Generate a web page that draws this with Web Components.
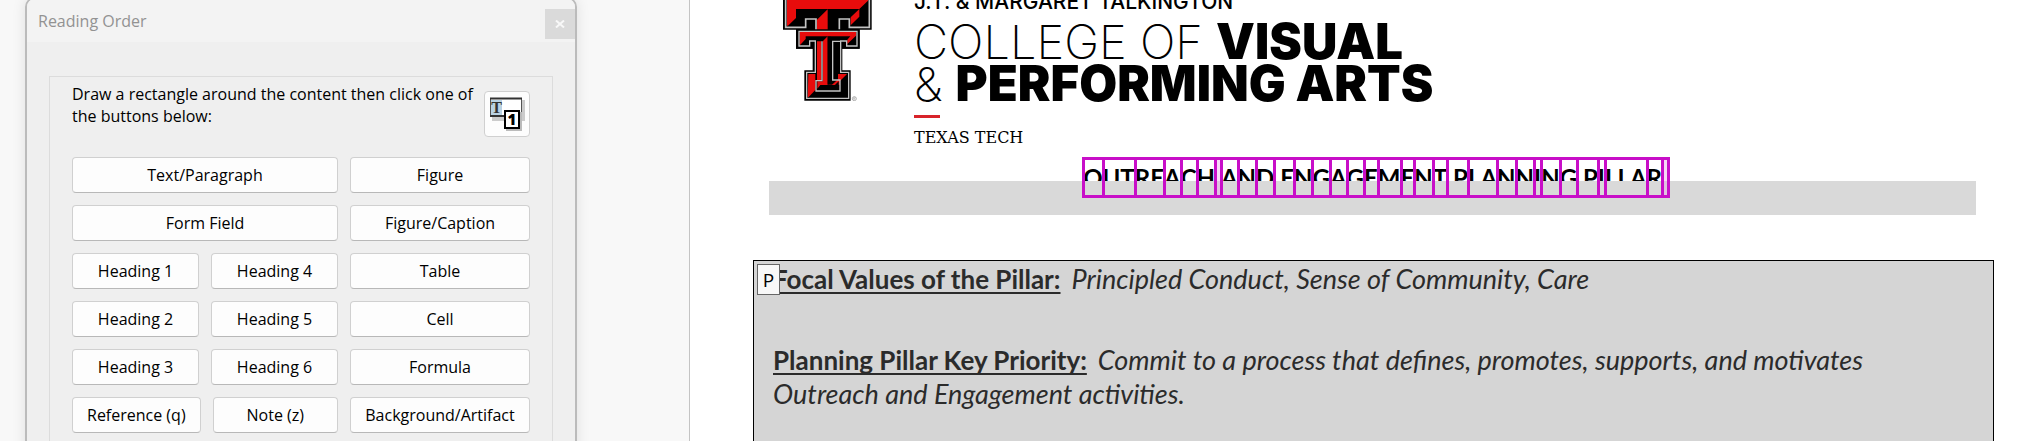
<!DOCTYPE html>
<html lang="en">
<head>
<meta charset="utf-8">
<title>Reading Order</title>
<style>
    body{
        margin:0;
        font-family: "Open Sans", "Noto Sans", sans-serif;
        font-size:16px;
        color:#000;
        background-color:#fff;
        overflow:hidden;
    }
</style>
</head>
<body>

<app-workspace>
    <reading-order-panel slot="panel" heading="Reading Order">
        <span slot="prompt">Draw a rectangle around the content then click one of the buttons below:</span>
        <tag-button slot="wide">Text/Paragraph</tag-button>
        <tag-button slot="side">Figure</tag-button>
        <tag-button slot="form">Form Field</tag-button>
        <tag-button slot="side">Figure/Caption</tag-button>
        <tag-button slot="row1">Heading 1</tag-button>
        <tag-button slot="row1">Heading 4</tag-button>
        <tag-button slot="side">Table</tag-button>
        <tag-button slot="row2">Heading 2</tag-button>
        <tag-button slot="row2">Heading 5</tag-button>
        <tag-button slot="side">Cell</tag-button>
        <tag-button slot="row3">Heading 3</tag-button>
        <tag-button slot="row3">Heading 6</tag-button>
        <tag-button slot="side">Formula</tag-button>
        <tag-button slot="row4">Reference (q)</tag-button>
        <tag-button slot="row4">Note (z)</tag-button>
        <tag-button slot="side">Background/Artifact</tag-button>
    </reading-order-panel>

    <college-header></college-header>
    <tagged-title runs="O|UT|RE|A|C|H| |A|N|D| E|N|G|A|G|E|M|E|N|T| P|LA|N|N|I|N|G| P|I|LLA|R| "></tagged-title>
    <tagged-region tag="P">
        <pillar-entry><span slot="label">Focal Values of the Pillar:</span>Principled Conduct, Sense of Community, Care</pillar-entry>
        <pillar-entry><span slot="label">Planning Pillar Key Priority:</span>Commit to a process that defines, promotes, supports, and motivates<br>Outreach and Engagement activities.</pillar-entry>
    </tagged-region>
</app-workspace>

<script>
class AppWorkspace extends HTMLElement {

    constructor() {
        super();
        this.shadow = this.attachShadow({mode: 'open'});
        this.render();
    }

    render() {
        this.shadow.innerHTML =
        `
        <style>
            :host{
                display:grid;
                grid-template-columns: 690px minmax(0, 1fr);
                height:100vh;
                overflow:hidden;
            }

            aside{
                box-sizing:border-box;
                padding:0 112px 0 25px;
                background-color:#f8f8f8;
                border-right:1px solid #c4c4c4;
            }

            main{
                display:flex;
                flex-direction:column;
                padding:0 34px 0 63px;
            }
        </style>

        <aside><slot name="panel"></slot></aside>
        <main><slot></slot></main>
        `;
    }
}

class ReadingOrderPanel extends HTMLElement {

    constructor() {
        super();
        this.shadow = this.attachShadow({mode: 'open'});
        this.render();
    }

    render() {
        this.shadow.innerHTML =
        `
        <style>
            :host{
                display:block;
                box-sizing:border-box;
                min-height:calc(100vh + 20px);
                margin-top:-3px;
                border:2px solid #bbb;
                border-radius:10px;
                background-color:#efefef;
                box-shadow:0 0 14px rgba(0, 0, 0, 0.1);
                overflow:hidden;
            }

            header{
                display:flex;
                align-items:center;
                justify-content:space-between;
                height:43px;
                padding:0 0 0 11px;
                background-color:#f3f3f3;
                color:#929292;
            }

            h2{
                margin:0;
                font-size:16px;
                font-weight:400;
            }

            .close{
                width:30px;
                height:30px;
                margin-top:7px;
                padding:0;
                border:0;
                background-color:#dadada;
            }

            .close svg{
                display:block;
                margin:auto;
            }

            section{
                display:flex;
                flex-direction:column;
                gap:20px;
                min-height:400px;
                margin:34px 22px 0;
                padding:6px 22px 0;
                border:1px solid #dcdcdc;
            }

            .prompt{
                display:flex;
                justify-content:space-between;
            }

            p{
                width:406px;
                margin:0;
                line-height:22px;
            }

            .order{
                flex:none;
                width:46px;
                height:46px;
                margin-top:8px;
                padding:0;
                border:1px solid #d0d0d0;
                border-radius:4px;
                background-color:#fdfdfd;
            }

            .order svg{
                display:block;
                margin:auto;
            }

            .buttons{
                display:grid;
                grid-template-columns:minmax(0, 1fr) 180px;
                gap:12px;
            }

            .column{
                display:flex;
                flex-direction:column;
                gap:12px;
            }

            .row{
                display:flex;
                gap:12px;
            }
        </style>

        <header>
            <h2></h2>
            <button class="close" aria-label="Close">
                <svg width="10" height="8" viewBox="0 0 10 8"><path d="M1 .5L9 7.5M9 .5L1 7.5" stroke="#f8f8f8" stroke-width="2"/></svg>
            </button>
        </header>
        <section>
            <div class="prompt">
                <p><slot name="prompt"></slot></p>
                <button class="order" aria-label="Show page content order">
                    <svg width="36" height="34" viewBox="0 0 36 34">
                        <rect x="3" y="3" width="33" height="21" fill="#ccc"/>
                        <rect x="1.500" y="1.500" width="31" height="18" fill="#fff" stroke="#555"/>
                        <path d="M1 1.500H33" stroke="#333" stroke-width="2"/>
                        <path d="M1 19H33" stroke="#333" stroke-width="2"/>
                        <rect x="2" y="3" width="11" height="15" fill="#b9d2e3"/>
                        <text x="7.500" y="16" text-anchor="middle" font-family="Liberation Serif, serif" font-size="16" font-weight="700" fill="#333">T</text>
                        <rect x="17" y="15" width="16" height="19" fill="#bbb"/>
                        <rect x="16" y="14" width="14" height="17" fill="#fff" stroke="#000" stroke-width="2"/>
                        <text x="23" y="28" text-anchor="middle" font-family="Open Sans, sans-serif" font-size="15" font-weight="800" fill="#000">1</text>
                    </svg>
                </button>
            </div>
            <div class="buttons">
                <div class="column">
                    <div class="row"><slot name="wide"></slot></div>
                    <div class="row"><slot name="form"></slot></div>
                    <div class="row"><slot name="row1"></slot></div>
                    <div class="row"><slot name="row2"></slot></div>
                    <div class="row"><slot name="row3"></slot></div>
                    <div class="row"><slot name="row4"></slot></div>
                </div>
                <div class="column"><slot name="side"></slot></div>
            </div>
        </section>
        `;
        this.shadow.querySelector('h2').textContent = this.getAttribute('heading');
    }
}

class TagButton extends HTMLElement {

    constructor() {
        super();
        this.shadow = this.attachShadow({mode: 'open'});
        this.render();
    }

    render() {
        this.shadow.innerHTML =
        `
        <style>
            :host{
                display:flex;
                flex:1 1 0;
            }

            button{
                flex:1;
                height:36px;
                padding:0 14px;
                border:1px solid #d0d0d0;
                border-bottom-color:#b8b8b8;
                border-radius:4px;
                background-color:#fdfdfd;
                color:inherit;
                font:inherit;
                white-space:nowrap;
            }
        </style>

        <button type="button"><slot></slot></button>
        `;
    }
}

class CollegeHeader extends HTMLElement {

    constructor() {
        super();
        this.shadow = this.attachShadow({mode: 'open'});
        this.render();
    }

    render() {
        this.shadow.innerHTML =
        `
        <style>
            :host{
                display:flex;
                gap:42px;
                height:157px;
                padding-left:30px;
                font-family: Inter, sans-serif;
                white-space:nowrap;
            }

            svg{
                flex:none;
            }

            .name{
                margin-top:-10px;
            }

            .donor{
                margin:0 0 7px;
                font-size:21px;
                font-weight:500;
                line-height:24px;
            }

            h1{
                margin:0;
                font-size:47px;
                font-weight:200;
                line-height:42px;
            }

            b{
                font-size:49px;
                font-weight:900;
            }

            hr{
                width:26px;
                height:3px;
                margin:10px 0 10px;
                border:0;
                background-color:#d8232a;
            }

            .school{
                margin:0;
                font-family: "DejaVu Serif", serif;
                font-size:16px;
                line-height:20px;
            }
        </style>

        <svg width="89" height="101" viewBox="69 0 267 303" role="img" aria-label="Double T logo">
            <path fill="#000" d="M69-5H335V89H299V146H247V211H272V302H133V211H158V146H108V89H69Z"/>
            <!-- large T -->
            <path fill="#e80c0c" d="M81-5H324V2L298 27H108V54L84 77H81Z"/>
            <path fill="#e80c0c" d="M171 59L203 28V92H171ZM298 27V50L272 76V52Z"/>
            <path fill="none" stroke="#c4c4c4" stroke-width="5" d="M77-5V82H137V57H168V92M328-5V82H268V57H238V92"/>
            <!-- small T -->
            <path fill="#000" d="M108 88H299V146H108Z"/>
            <path fill="#e80c0c" d="M119 96H288V107L262 132V119L271 109H137V117L121 134H119Z"/>
            <path fill="#e80c0c" d="M171 124H184V240H171ZM189 123L203 109V254H216L234 238V222H261L240 243V254L226 255H181L172 266V244H189Z"/>
            <path fill="#e80c0c" d="M145 222H166V270L146 291H143Z"/>
            <path fill="#000" d="M203 110H213V248L203 254ZM172 272L187 256H224L236 244V272Z"/>
            <path fill="none" stroke="#c4c4c4" stroke-width="4" d="M117 94H291V138H260V123H242V217H266V295H140V217H166V123H149V138H117Z"/>
            <path fill="none" stroke="#c4c4c4" stroke-width="4" d="M186 124V242H168V273H240V240H218V124H240"/>
            <circle cx="283" cy="296" r="6" fill="none" stroke="#888" stroke-width="2"/>
            <path d="M281 299V293H285V296H281L285 299" fill="none" stroke="#888"/>
        </svg>
        <div class="name">
            <p class="donor">J.T. &amp; MARGARET TALKINGTON</p>
            <h1>COLLEGE OF <b>VISUAL</b><br>&amp; <b>PERFORMING ARTS</b></h1>
            <hr>
            <p class="school">TEXAS TECH</p>
        </div>
        `;
    }
}

class TaggedTitle extends HTMLElement {

    constructor() {
        super();
        this.shadow = this.attachShadow({mode: 'open'});
        this.render();
    }

    render() {
        this.shadow.innerHTML =
        `
        <style>
            :host{
                display:block;
                margin:0 18px 0 16px;
                font-family: Lato, sans-serif;
            }

            h2{
                display:flex;
                width:max-content;
                margin:0 auto;
                padding-left:6px;
                font-size:24px;
                font-weight:700;
                line-height:41px;
                white-space:pre;
            }

            span{
                position:relative;
            }

            /* outlines stay above the shaded bar, the letters go under it */
            span::after{
                content:"";
                position:absolute;
                z-index:2;
                inset:0 -2px 0 -1px;
                border:3px solid #c80fc8;
            }

            .blank::after{
                background-color:rgba(235, 160, 235, 0.4);
            }

            .bar{
                position:relative;
                z-index:1;
                height:34px;
                margin-top:-17px;
                background-color:#d9d9d9;
            }
        </style>

        <h2></h2>
        <div class="bar"></div>
        `;
        const title = this.shadow.querySelector('h2');
        this.getAttribute('runs').split('|').forEach(run => {
            const span = document.createElement('span');
            span.textContent = run;
            if (run === ' ') span.className = 'blank';
            title.append(span);
        });
    }
}

class TaggedRegion extends HTMLElement {

    constructor() {
        super();
        this.shadow = this.attachShadow({mode: 'open'});
        this.render();
    }

    render() {
        this.shadow.innerHTML =
        `
        <style>
            :host{
                display:flex;
                flex:1 0 auto;
                flex-direction:column;
                gap:47px;
                position:relative;
                margin-top:45px;
                padding:1px 19px 40px;
                border:1px solid #000;
                background-color:#d5d5d5;
                color:#2b2b2b;
                font-family: Lato, sans-serif;
            }

            .tag{
                position:absolute;
                top:3px;
                left:3px;
                box-sizing:border-box;
                width:23px;
                height:31px;
                border:1px solid #666;
                background-color:#f8f8f8;
                color:#000;
                font:19px/30px "Open Sans", sans-serif;
                text-align:center;
            }
        </style>

        <slot></slot>
        <div class="tag"></div>
        `;
        this.shadow.querySelector('.tag').textContent = this.getAttribute('tag');
    }
}

class PillarEntry extends HTMLElement {

    constructor() {
        super();
        this.shadow = this.attachShadow({mode: 'open'});
        this.render();
    }

    render() {
        this.shadow.innerHTML =
        `
        <style>
            :host{
                display:block;
                font-size:27px;
                font-style:italic;
                line-height:34px;
            }

            b{
                margin-right:11px;
                font-size:26px;
                font-style:normal;
                text-decoration:underline;
                text-decoration-thickness:2px;
                text-underline-offset:3px;
                text-decoration-skip-ink:none;
            }
        </style>

        <b><slot name="label"></slot></b><slot></slot>
        `;
    }
}

customElements.define('app-workspace', AppWorkspace);
customElements.define('reading-order-panel', ReadingOrderPanel);
customElements.define('tag-button', TagButton);
customElements.define('college-header', CollegeHeader);
customElements.define('tagged-title', TaggedTitle);
customElements.define('tagged-region', TaggedRegion);
customElements.define('pillar-entry', PillarEntry);
</script>
</body>
</html>
